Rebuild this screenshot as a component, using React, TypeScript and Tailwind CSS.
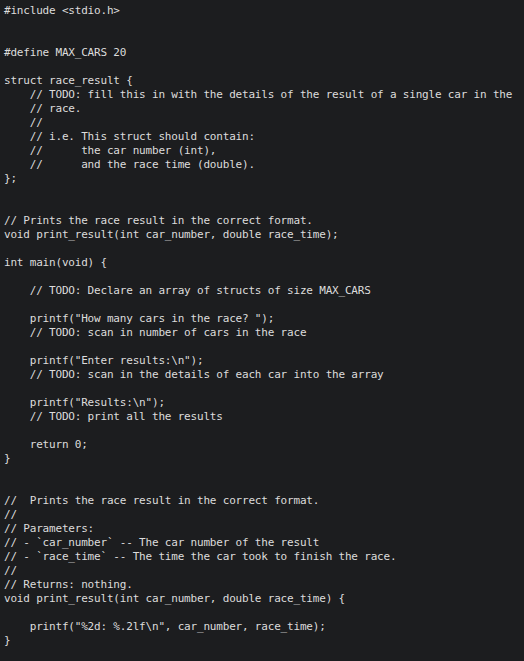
const code = `#include <stdio.h>


#define MAX_CARS 20

struct race_result {
    // TODO: fill this in with the details of the result of a single car in the
    // race.
    //
    // i.e. This struct should contain:
    //      the car number (int),
    //      and the race time (double).
};


// Prints the race result in the correct format.
void print_result(int car_number, double race_time);

int main(void) {

    // TODO: Declare an array of structs of size MAX_CARS

    printf("How many cars in the race? ");
    // TODO: scan in number of cars in the race

    printf("Enter results:\\n");
    // TODO: scan in the details of each car into the array

    printf("Results:\\n");
    // TODO: print all the results

    return 0;
}


//  Prints the race result in the correct format.
//
// Parameters:
// - \`car_number\` -- The car number of the result
// - \`race_time\` -- The time the car took to finish the race.
//
// Returns: nothing.
void print_result(int car_number, double race_time) {

    printf("%2d: %.2lf\\n", car_number, race_time);
}`;

export default function App() {
  return (
    <div className="w-[524px] h-[661px] bg-[#1c1d1f] overflow-hidden">
      <pre className="m-0 pt-[4px] pl-[4px] text-[#dcdcdc] text-[11px] tracking-[-0.19px] leading-[14px] whitespace-pre font-['DejaVu_Sans_Mono',monospace]">
        {code}
      </pre>
    </div>
  );
}
